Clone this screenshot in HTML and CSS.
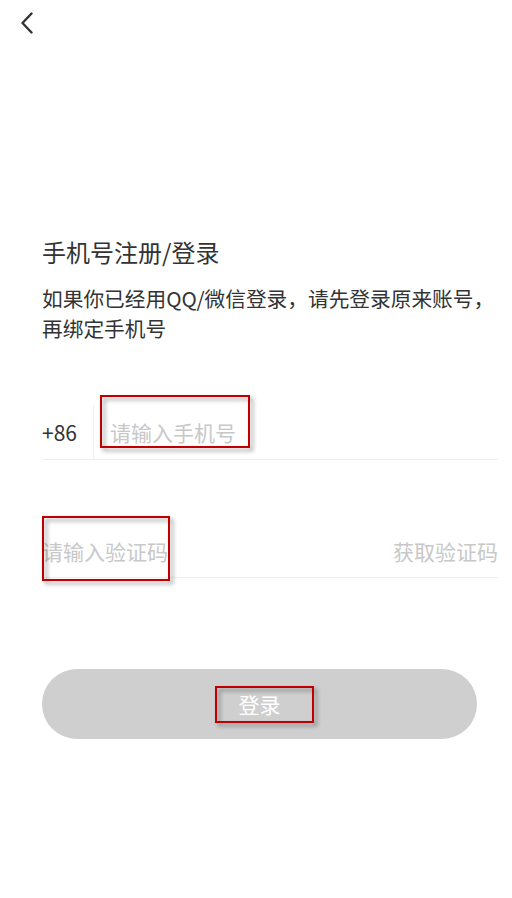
FILE: index.html
```html
<!DOCTYPE html>
<html lang="zh-CN">
<head>
<meta charset="utf-8">
<link rel="stylesheet" href="styles.css">
</head>
<body>
<div class="page">
  <div class="header">
    <svg class="back" width="14" height="22" viewBox="0 0 14 22"><path d="M11.5 1.5 L2.5 11 L11.5 20.5" fill="none" stroke="#333" stroke-width="2.4" stroke-linecap="round" stroke-linejoin="round"/></svg>
  </div>
  <div class="content">
    <div class="title">手机号注册/登录</div>
    <div class="subtitle">如果你已经用QQ/微信登录，请先登录原来账号，<br>再绑定手机号</div>
    <div class="row phone-row">
      <span class="prefix">+86</span>
      <span class="sep"></span>
      <span class="placeholder ph-phone">请输入手机号<span class="mark mark-phone"></span></span>
    </div>
    <div class="row code-row">
      <span class="placeholder">请输入验证码<span class="mark mark-code"></span></span>
      <span class="get-code">获取验证码</span>
    </div>
    <div class="btn"><span class="btn-text">登录<span class="mark mark-btn"></span></span></div>
  </div>
</div>
</body>
</html>
```
FILE: styles.css
```css
html, body {
  margin: 0;
  padding: 0;
  background: #fff;
}
body {
  font-family: "Noto Sans CJK SC", "Noto Sans", sans-serif;
  color: #333;
}
.page {
  width: 512px;
  height: 898px;
  overflow: hidden;
}
.header {
  height: 48px;
  display: flex;
  align-items: flex-start;
  padding: 12px 0 0 20px;
  box-sizing: border-box;
}
.back {
  display: block;
}
.content {
  padding: 188px 14px 0 42px;
}
.title {
  font-size: 24px;
  line-height: 32px;
  color: #333;
}
.subtitle {
  margin-top: 15px;
  font-size: 20.7px;
  line-height: 30px;
  color: #333;
}
.row {
  display: flex;
  align-items: center;
  border-bottom: 1px solid #eeeeee;
  box-sizing: border-box;
}
.phone-row {
  margin-top: 62px;
  height: 55px;
}
.prefix {
  font-size: 21px;
  line-height: 28px;
  color: #333;
  width: 51px;
}
.sep {
  align-self: stretch;
  width: 1px;
  background: #f0f0f0;
}
.placeholder {
  position: relative;
  font-size: 21px;
  line-height: 28px;
  color: #c8c8c8;
}
.ph-phone {
  margin-left: 16px;
}
.code-row {
  margin-top: 65px;
  height: 53px;
  justify-content: space-between;
}
.get-code {
  font-size: 21px;
  line-height: 28px;
  color: #c8c8c8;
}
.btn {
  margin-top: 91px;
  width: 435px;
  height: 70px;
  border-radius: 35px;
  background: #cfcfcf;
  display: flex;
  align-items: center;
  justify-content: center;
}
.btn-text {
  position: relative;
  font-size: 21px;
  line-height: 28px;
  color: #fff;
}
.mark {
  position: absolute;
  border: 2px solid #c00000;
  filter: drop-shadow(3px 3px 2px rgba(0, 0, 0, 0.4));
  box-sizing: border-box;
}
.mark-phone {
  left: -10px;
  right: -14px;
  top: -23px;
  bottom: -2px;
}
.mark-code {
  left: 0;
  right: -2px;
  top: -21px;
  bottom: -16px;
}
.mark-btn {
  left: -24px;
  right: -33px;
  top: -4px;
  bottom: -5px;
}
```
